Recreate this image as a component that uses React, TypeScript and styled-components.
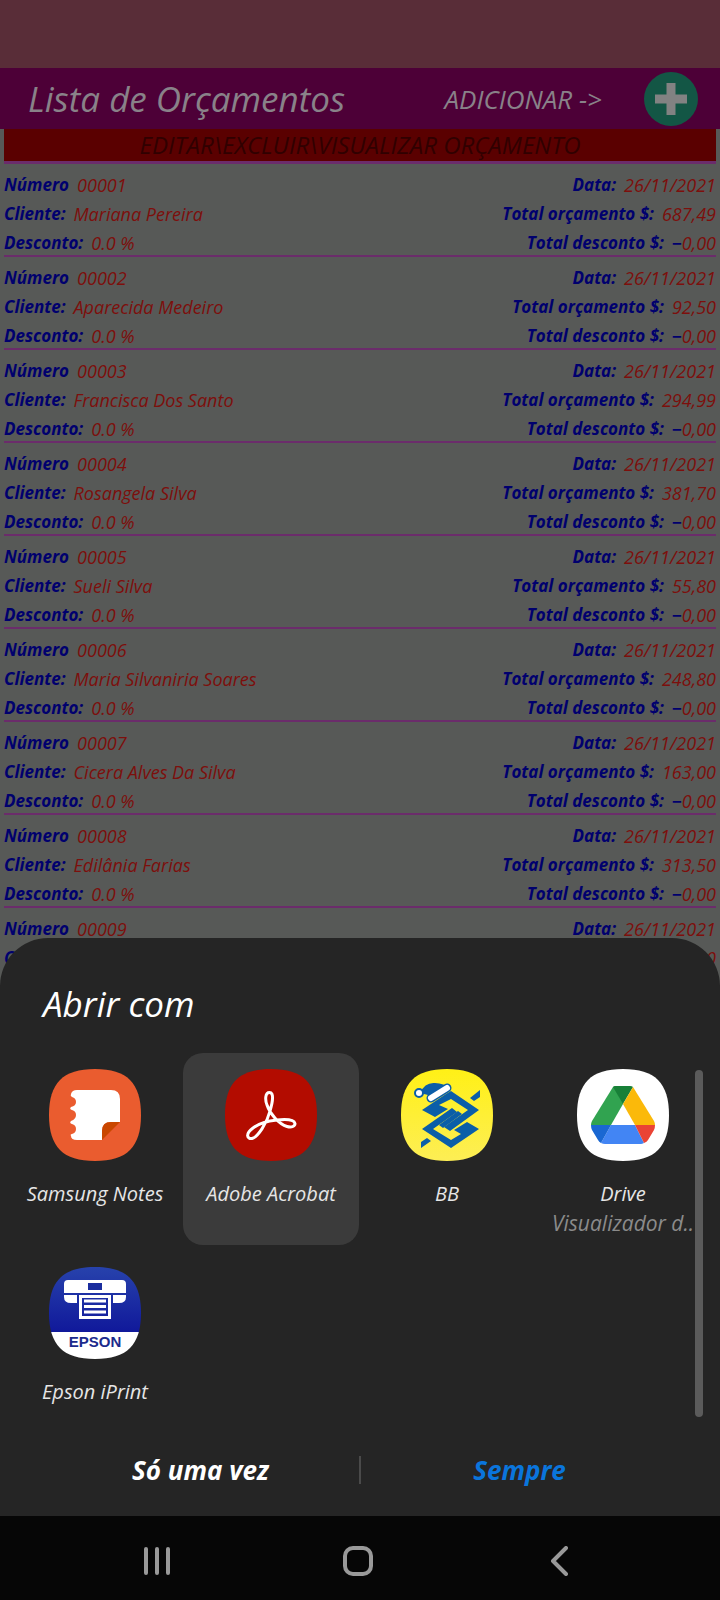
import React from "react";
import styled, { createGlobalStyle } from "styled-components";

const color = {
  ink: "#00006e",
  value: "#7d0f0c",
  page: "#575957",
  rule: "#6b2c6b",
  sheet: "#252525",
};

const GlobalStyle = createGlobalStyle`
  *, *::before, *::after { box-sizing: border-box; }
  body {
    margin: 0;
    background: #060606;
    font-family: "Open Sans", "Noto Sans", sans-serif;
    font-style: italic;
  }
  h1, h2, p, ul, dl, dd { margin: 0; padding: 0; }
  ul { list-style: none; }
  button { border: 0; padding: 0; background: none; font: inherit; color: inherit; cursor: pointer; }
`;

const Screen = styled.div`
  position: relative;
  display: flex;
  flex-direction: column;
  height: 100vh;
  overflow: hidden;
  background: ${color.page};
`;

const StatusBar = styled.div`
  flex: none;
  height: 68px;
  background: #592d38;
`;

const Header = styled.header`
  flex: none;
  display: flex;
  align-items: center;
  height: 61px;
  padding: 0 22px 0 28px;
  background: #4d0037;
  color: #898289;
`;

const Title = styled.h1`
  flex: 1;
  font-size: 35px;
  line-height: 48px;
  font-weight: 400;
`;

const AddHint = styled.span`
  margin-right: 42px;
  font-size: 26px;
  line-height: 36px;
`;

const AddButton = styled.button`
  width: 54px;
  height: 54px;
  svg { display: block; }
`;

const Main = styled.main`
  flex: 1;
  min-height: 0;
  overflow: hidden;
  padding: 0 4px;
`;

const Banner = styled.p`
  height: 35px;
  border-bottom: 3px solid ${color.rule};
  background: #5a0000;
  color: #300000;
  font-size: 24px;
  line-height: 32px;
  text-align: center;
  white-space: nowrap;
`;

const Record = styled.li`
  padding-top: 9px;
  border-bottom: 2px solid ${color.rule};
`;

const Fields = styled.dl`
  display: grid;
  grid-template-columns: 1fr auto;
  row-gap: 5px;
`;

const Field = styled.div<{ $end?: boolean }>`
  display: flex;
  justify-content: ${(p) => (p.$end ? "flex-end" : "flex-start")};
  gap: 8px;
  font-size: 18px;
  line-height: 24px;
  white-space: nowrap;
`;

const Label = styled.dt`
  color: ${color.ink};
  font-size: 17px;
  font-weight: 700;
`;

const Value = styled.dd`
  color: ${color.value};
`;

const Minus = styled.b`
  color: ${color.ink};
`;

const Overlay = styled.div`
  position: absolute;
  inset: auto 0 0 0;
`;

const Sheet = styled.section`
  padding: 42px 9px 0 7px;
  border-radius: 48px 48px 0 0;
  background: ${color.sheet};
  color: #e6e6e6;
`;

const SheetTitle = styled.h2`
  padding: 0 36px;
  color: #fff;
  font-size: 35px;
  line-height: 48px;
  font-weight: 400;
`;

const AppArea = styled.div`
  position: relative;
  margin-top: 25px;
`;

const AppGrid = styled.ul`
  display: grid;
  grid-template-columns: repeat(4, 1fr);
  row-gap: 6px;
`;

const AppButton = styled.button<{ $active?: boolean }>`
  display: flex;
  flex-direction: column;
  align-items: center;
  width: 100%;
  height: 192px;
  padding-top: 16px;
  border-radius: 20px;
  background: ${(p) => (p.$active ? "#3b3b3b" : "transparent")};
  svg { display: block; }
`;

const AppName = styled.span`
  margin-top: 18px;
  font-size: 20px;
  line-height: 30px;
  white-space: nowrap;
`;

const AppNote = styled.span`
  color: #8b8b8b;
  font-size: 21px;
  line-height: 28px;
  white-space: nowrap;
`;

const ScrollThumb = styled.div`
  position: absolute;
  top: 17px;
  right: 8px;
  width: 8px;
  height: 347px;
  border-radius: 4px;
  background: #5b5b5b;
`;

const Actions = styled.div`
  display: flex;
  align-items: center;
  height: 73px;
  padding: 0 33px 20px 35px;
`;

const Action = styled.button<{ $primary?: boolean }>`
  flex: 1;
  color: ${(p) => (p.$primary ? "#0a75dc" : "#fff")};
  font-size: 26px;
  line-height: 40px;
  font-weight: 700;
`;

const Divider = styled.span`
  width: 2px;
  height: 28px;
  background: #4a4a4a;
`;

const NavBar = styled.nav`
  display: flex;
  align-items: center;
  justify-content: space-around;
  height: 84px;
  padding: 6px 60px 0 56px;
  background: #060606;
`;

const NavButton = styled.button`
  display: flex;
  align-items: center;
  justify-content: center;
  width: 84px;
  height: 60px;
`;

const TILE = "M46 0C78 0 92 14 92 46S78 92 46 92 0 78 0 46 14 0 46 0Z";

const NotesIcon = () => (
  <svg width="92" height="92" viewBox="0 0 92 92" aria-hidden="true">
    <path d={TILE} fill="#ea5c2f" />
    <path
      fill="#fff"
      d="M28 21H62Q71 21 71 30V53L53 71H28Q22 71 22 67Q21 65 23 65Q27 64 27 60T23 55Q20 54 22 52Q27 50 27 46T23 41Q20 40 22 38Q27 37 27 33T23 28Q21 27 22 25Q23 21 28 21Z"
    />
    <path fill="#ea5c2f" d="M53 72V62Q53 53 62 53H72V72Z" />
    <path fill="#c94700" d="M53 71V62Q53 53 62 53H71Z" />
  </svg>
);

const AcrobatIcon = () => (
  <svg width="92" height="92" viewBox="0 0 92 92" aria-hidden="true">
    <path d={TILE} fill="#b30c00" />
    <path
      fill="none"
      stroke="#fff"
      strokeWidth="3"
      strokeLinejoin="round"
      d="M44.500 23.500C40 23.500 40 31 42 36C45 45 54 55 62 57.500C67 59 70 57 70 54.500C69 50.500 61 50 52 51C42 52 33 55 28 59C20 65 22 70 27 69.500C33 68 42 54 45 42C48 32 49 23.500 44.500 23.500Z"
    />
  </svg>
);

const BBIcon = () => (
  <svg width="92" height="92" viewBox="0 0 92 92" aria-hidden="true">
    <defs>
      <linearGradient id="bb" x1="0" y1="0" x2="0" y2="1">
        <stop offset="0" stopColor="#fff016" />
        <stop offset="1" stopColor="#fdee55" />
      </linearGradient>
    </defs>
    <path d={TILE} fill="url(#bb)" />
    <g fill="#0b5ea8">
      <path d="M21 41L45 25L50 22L78 41L49 62L43 58L67 41L50 30L38 36L47 40L34 48Z" />
      <path d="M78 60L66 53L53 61L60 65L50 71L32 60L56 43L51 39L21 60L50 79Z" />
      <path d="M69 29L79 21V28L73 32ZM30 72L20 79V73L26 69Z" />
      <path d="M38 56L57 42L61 45L42 59Z" />
      <path d="M19 24Q24 13 34 14Q43 14 49 20L30 32L27 26Z" />
    </g>
    <circle cx="18" cy="24" r="4" fill="#fff" stroke="#0b5ea8" strokeWidth="2" />
    <path d="M30 29L46 19" stroke="#0b5ea8" strokeWidth="9" strokeLinecap="round" />
    <path d="M30 29L46 19" stroke="#fff" strokeWidth="6" strokeLinecap="round" />
  </svg>
);

const DriveIcon = () => (
  <svg width="92" height="92" viewBox="0 0 92 92" aria-hidden="true">
    <path d={TILE} fill="#fff" />
    <path d="M36 18Q37 17 39 17H46L46 35L34 56H14Q14 54 15 52Z" fill="#31a350" />
    <path d="M36 18Q37 17 39 17H53Q55 17 56 18L46 35Z" fill="#188038" />
    <path d="M56 18L77 52Q78 54 78 56H58L46 35Z" fill="#fbb90a" />
    <path d="M34 56H58L67 74Q65 75 64 75H28Q26 75 24 74Z" fill="#4285f4" />
    <path d="M14 56H34L24 74Q22 73 21 71L15 61Q14 59 14 56Z" fill="#1967d2" />
    <path d="M58 56H78Q78 59 77 61L71 71Q70 73 67 74Z" fill="#ea4335" />
  </svg>
);

const EpsonIcon = () => (
  <svg width="92" height="92" viewBox="0 0 92 92" aria-hidden="true">
    <defs>
      <clipPath id="tile"><path d={TILE} /></clipPath>
      <linearGradient id="ep" x1="0" y1="0" x2="0" y2="1">
        <stop offset="0" stopColor="#2742ac" />
        <stop offset="1" stopColor="#10189a" />
      </linearGradient>
    </defs>
    <g clipPath="url(#tile)">
      <rect width="92" height="66" fill="url(#ep)" />
      <rect y="65" width="92" height="27" fill="#fff" />
    </g>
    <path d="M19 13H73Q77 13 77 17V26H15V17Q15 13 19 13ZM15 28H28V36H22Q15 36 15 30ZM64 28H77V30Q77 36 70 36H64Z" fill="#fff" />
    <rect x="39" y="16" width="14" height="7" fill="#1b2d9e" />
    <path d="M31.500 29.500H60.500V50.500H31.500Z" fill="none" stroke="#fff" strokeWidth="3" />
    <path d="M35 34H57M35 39.500H57M35 45H57" stroke="#fff" strokeWidth="3" />
    <text
      x="46"
      y="80"
      textAnchor="middle"
      fill="#1b2a8c"
      fontFamily="Liberation Sans, sans-serif"
      fontSize="15"
      fontStyle="normal"
      fontWeight="700"
    >
      EPSON
    </text>
  </svg>
);

const apps = [
  { name: "Samsung Notes", Icon: NotesIcon },
  { name: "Adobe Acrobat", Icon: AcrobatIcon, active: true },
  { name: "BB", Icon: BBIcon },
  { name: "Drive", Icon: DriveIcon, note: "Visualizador d.." },
  { name: "Epson iPrint", Icon: EpsonIcon },
];

const budgets = [
  ["00001", "Mariana Pereira", "687,49"],
  ["00002", "Aparecida Medeiro", "92,50"],
  ["00003", "Francisca Dos Santo", "294,99"],
  ["00004", "Rosangela Silva", "381,70"],
  ["00005", "Sueli Silva", "55,80"],
  ["00006", "Maria Silvaniria Soares", "248,80"],
  ["00007", "Cicera Alves Da Silva", "163,00"],
  ["00008", "Edilânia Farias", "313,50"],
  ["00009", "", "0,00"],
];

const BudgetRecord = ({ id, client, total }: { id: string; client: string; total: string }) => (
  <Record>
    <Fields>
      <Field><Label>Número</Label><Value>{id}</Value></Field>
      <Field $end><Label>Data:</Label><Value>26/11/2021</Value></Field>
      <Field><Label>Cliente:</Label><Value>{client}</Value></Field>
      <Field $end><Label>Total orçamento $:</Label><Value>{total}</Value></Field>
      <Field><Label>Desconto:</Label><Value>0.0 %</Value></Field>
      <Field $end><Label>Total desconto $:</Label><Value><Minus>−</Minus>0,00</Value></Field>
    </Fields>
  </Record>
);

export default function App() {
  return (
    <Screen>
      <GlobalStyle />
      <StatusBar />
      <Header>
        <Title>Lista de Orçamentos</Title>
        <AddHint>ADICIONAR -&gt;</AddHint>
        <AddButton aria-label="Adicionar">
          <svg width="54" height="54" viewBox="0 0 54 54" aria-hidden="true">
            <circle cx="27" cy="27" r="27" fill="#135645" />
            <path d="M27 11V43M11 27H43" stroke="#828282" strokeWidth="9" />
          </svg>
        </AddButton>
      </Header>
      <Main>
        <Banner>EDITAR\EXCLUIR\VISUALIZAR ORÇAMENTO</Banner>
        <ul>
          {budgets.map(([id, client, total]) => (
            <BudgetRecord key={id} id={id} client={client} total={total} />
          ))}
        </ul>
      </Main>
      <Overlay>
        <Sheet role="dialog" aria-labelledby="open-with">
          <SheetTitle id="open-with">Abrir com</SheetTitle>
          <AppArea>
            <AppGrid>
              {apps.map(({ name, Icon, active, note }) => (
                <li key={name}>
                  <AppButton $active={active}>
                    <Icon />
                    <AppName>{name}</AppName>
                    {note && <AppNote>{note}</AppNote>}
                  </AppButton>
                </li>
              ))}
            </AppGrid>
            <ScrollThumb />
          </AppArea>
          <Actions>
            <Action>Só uma vez</Action>
            <Divider />
            <Action $primary>Sempre</Action>
          </Actions>
        </Sheet>
        <NavBar>
          <NavButton aria-label="Recentes">
            <svg width="28" height="30" viewBox="0 0 28 30" aria-hidden="true">
              <path d="M3 3V27M14 3V27M25 3V27" stroke="#999" strokeWidth="4" strokeLinecap="round" />
            </svg>
          </NavButton>
          <NavButton aria-label="Início">
            <svg width="32" height="32" viewBox="0 0 32 32" aria-hidden="true">
              <rect x="3" y="3" width="26" height="26" rx="8" fill="none" stroke="#999" strokeWidth="4" />
            </svg>
          </NavButton>
          <NavButton aria-label="Voltar">
            <svg width="18" height="30" viewBox="0 0 18 30" aria-hidden="true">
              <path d="M16 2L3 15L16 28" fill="none" stroke="#999" strokeWidth="4" strokeLinecap="round" strokeLinejoin="round" />
            </svg>
          </NavButton>
        </NavBar>
      </Overlay>
    </Screen>
  );
}
